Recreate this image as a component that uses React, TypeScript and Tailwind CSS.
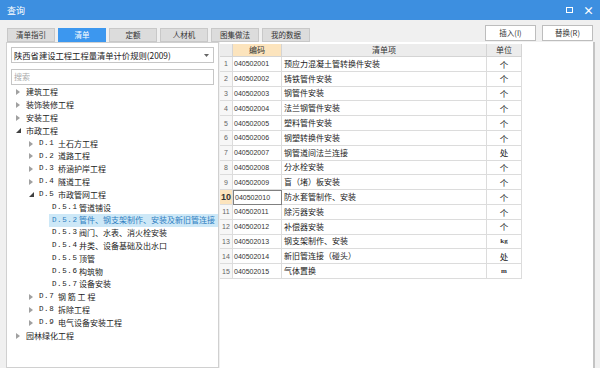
import React from "react"

type Node = { level: 0 | 1 | 2; code?: string; name: string; state?: "open" | "closed" | "leaf"; selected?: boolean }

const tree: Node[] = [
  { level: 0, name: "建筑工程", state: "closed" },
  { level: 0, name: "装饰装修工程", state: "closed" },
  { level: 0, name: "安装工程", state: "closed" },
  { level: 0, name: "市政工程", state: "open" },
  { level: 1, code: "D.1", name: "土石方工程", state: "closed" },
  { level: 1, code: "D.2", name: "道路工程", state: "closed" },
  { level: 1, code: "D.3", name: "桥涵护岸工程", state: "closed" },
  { level: 1, code: "D.4", name: "隧道工程", state: "closed" },
  { level: 1, code: "D.5", name: "市政管网工程", state: "open" },
  { level: 2, code: "D.5.1", name: "管道铺设" },
  { level: 2, code: "D.5.2", name: "管件、钢支架制作、安装及新旧管连接", selected: true },
  { level: 2, code: "D.5.3", name: "阀门、水表、消火栓安装" },
  { level: 2, code: "D.5.4", name: "井类、设备基础及出水口" },
  { level: 2, code: "D.5.5", name: "顶管" },
  { level: 2, code: "D.5.6", name: "构筑物" },
  { level: 2, code: "D.5.7", name: "设备安装" },
  { level: 1, code: "D.7", name: "钢 筋 工 程", state: "closed" },
  { level: 1, code: "D.8", name: "拆除工程", state: "closed" },
  { level: 1, code: "D.9", name: "电气设备安装工程", state: "closed" },
  { level: 0, name: "园林绿化工程", state: "closed" },
]

const rows: [string, string, string][] = [
  ["040502001", "预应力混凝土管转换件安装", "个"],
  ["040502002", "铸铁管件安装", "个"],
  ["040502003", "钢管件安装", "个"],
  ["040502004", "法兰钢管件安装", "个"],
  ["040502005", "塑料管件安装", "个"],
  ["040502006", "钢塑转换件安装", "个"],
  ["040502007", "钢管道间法兰连接", "处"],
  ["040502008", "分水栓安装", "个"],
  ["040502009", "盲（堵）板安装", "个"],
  ["040502010", "防水套管制作、安装", "个"],
  ["040502011", "除污器安装", "个"],
  ["040502012", "补偿器安装", "个"],
  ["040502013", "钢支架制作、安装", "kg"],
  ["040502014", "新旧管连接（碰头）", "处"],
  ["040502015", "气体置换", "m"],
]

const tabs = ["清单指引", "清单", "定额", "人材机", "图集做法", "我的数据"]

function Arrow({ open }: { open: boolean }) {
  if (open)
    return (
      <svg width="5" height="5" viewBox="0 0 5 5">
        <path d="M5 0 L5 5 L0 5 Z" fill="#404040" />
      </svg>
    )
  return (
    <svg width="4" height="6" viewBox="0 0 4 6">
      <path d="M0 0 L4 3 L0 6 Z" fill="#a0a0a0" />
    </svg>
  )
}

function TreeRow({ n }: { n: Node }) {
  if (n.level === 2) {
    return (
      <div className="flex h-[12.8px] items-center whitespace-nowrap pl-[42px]">
        <div className={`flex h-full items-center pl-[3px] pr-[3px] ${n.selected ? "bg-[#cde8f7] text-[#2d7fc2]" : "text-[#222]"}`}>
          <span className="w-[27px] font-['Liberation_Mono'] text-[7.5px] tracking-[0.6px]">{n.code}</span>
          <span>{n.name}</span>
        </div>
      </div>
    )
  }
  return (
    <div className={`flex h-[12.8px] items-center whitespace-nowrap ${n.level === 0 ? "pl-[9px]" : "pl-[22px]"}`}>
      <span className="flex w-[10px] items-center">{n.state !== "leaf" && <Arrow open={n.state === "open"} />}</span>
      {n.code && <span className="w-[19px] font-['Liberation_Mono'] text-[7.5px] tracking-[0.6px] text-[#222]">{n.code}</span>}
      <span className="text-[#222]">{n.name}</span>
    </div>
  )
}

export default function App() {
  return (
    <div className="flex h-[368px] w-[600px] flex-col overflow-hidden bg-[#f0f0f0] font-['Noto_Sans_CJK_SC',sans-serif] text-[8px] leading-none">
      <div className="flex h-[20px] shrink-0 items-center justify-between bg-[#3d8fe0] pl-[7px] pr-[6px] text-white">
        <span className="text-[9px]">查询</span>
        <div className="flex items-center gap-[10px]">
          <span className="block h-[6px] w-[7px] border-[1.5px] border-white" />
          <span className="text-[11px] font-bold">×</span>
        </div>
      </div>

      <div className="flex h-[22px] shrink-0 items-end justify-between pl-[7px] pr-[7px]">
        <div className="flex gap-[3px]">
          {tabs.map((t) => (
            <div
              key={t}
              className={`flex h-[14px] w-[48px] items-center justify-center border text-[7.5px] ${
                t === "清单" ? "border-[#3c97ef] bg-[#3c97ef] text-white" : "border-[#c8c8c8] bg-[#dcdcdc] text-[#333]"
              }`}
            >
              {t}
            </div>
          ))}
        </div>
        <div className="mb-[1px] flex gap-[6px]">
          <button className="flex h-[16px] w-[51px] items-center justify-center border border-[#bdbdbd] bg-white text-[7.5px] text-[#333]">插入(I)</button>
          <button className="flex h-[16px] w-[51px] items-center justify-center border border-[#bdbdbd] bg-white text-[7.5px] text-[#333]">替换(R)</button>
        </div>
      </div>

      <div className="flex min-h-0 flex-1 pl-[6px]">
        <div className="flex w-[213px] flex-col border border-[#d0d0d0] bg-white px-[4px] pt-[4px]">
          <div className="flex h-[16px] items-center justify-between whitespace-nowrap border border-[#c6c6c6] pl-[2px] pr-[4px] text-[8.3px] text-[#222]">
            <span>陕西省建设工程工程量清单计价规则(2009)</span>
            <svg width="5" height="3" viewBox="0 0 5 3">
              <path d="M0 0 L5 0 L2.5 3 Z" fill="#666" />
            </svg>
          </div>
          <div className="mt-[6px] flex h-[16px] items-center border border-[#c6c6c6] pl-[2px] text-[#aaa]">搜索</div>
          <div className="mt-[1px] -ml-[4px]">
            {tree.map((n, i) => (
              <TreeRow key={i} n={n} />
            ))}
          </div>
        </div>

        <div className="ml-[1px] flex-1 border-r-[2px] border-[#c4c4c4] bg-white pt-[2px]">
          <div className="grid w-[302px] grid-cols-[13px_49px_205px_35px] whitespace-nowrap text-[8px]">
            <div className="h-[13px] border-r border-b border-[#d4d4d4] bg-[#ececec]" />
            <div className="flex h-[13px] items-center justify-center border-r border-b border-[#d4d4d4] bg-[#fce4bd] text-[#333]">编码</div>
            <div className="flex h-[13px] items-center justify-center border-r border-b border-[#d4d4d4] bg-[#ececec] text-[#333]">清单项</div>
            <div className="flex h-[13px] items-center justify-center border-r border-b border-[#d4d4d4] bg-[#ececec] text-[#333]">单位</div>
            {rows.map(([code, name, unit], i) => {
              const sel = i === 9
              return (
                <React.Fragment key={code}>
                  <div
                    className={`flex h-[14.8px] items-center justify-center border-r border-b border-[#dcdcdc] font-['Liberation_Sans'] ${
                      sel ? "bg-[#fce4bd] text-[9px] font-bold text-[#333]" : "bg-[#f7f7f7] text-[7px] text-[#666]"
                    }`}
                  >
                    {i + 1}
                  </div>
                  <div
                    className={`flex h-[14.8px] items-center pl-[1px] font-['Liberation_Sans'] text-[7px] text-[#333] ${
                      sel ? "border border-[#808080]" : "border-r border-b border-[#dcdcdc]"
                    }`}
                  >
                    {code}
                  </div>
                  <div className="flex h-[14.8px] items-center border-r border-b border-[#dcdcdc] pl-[2px] text-[#222]">{name}</div>
                  <div className="flex h-[14.8px] items-center justify-center border-r border-b border-[#dcdcdc] text-[8.5px] text-[#222]">
                    {unit === "kg" || unit === "m" ? <span className="font-['Liberation_Serif'] text-[7px] font-bold text-[#333]">{unit}</span> : unit}
                  </div>
                </React.Fragment>
              )
            })}
          </div>
        </div>
        <div className="w-[5px]" />
      </div>
    </div>
  )
}
